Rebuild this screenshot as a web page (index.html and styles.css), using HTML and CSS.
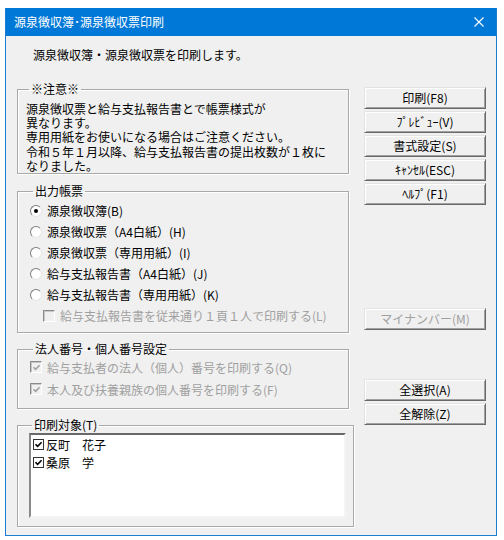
FILE: index.html
```html
<!DOCTYPE html>
<html lang="ja">
  <head>
    <meta charset="UTF-8" />
    <title>源泉徴収簿・源泉徴収票印刷</title>
    <link rel="stylesheet" href="styles.css">
  </head>
  <body>
    <div class="window">
      <div class="titlebar">
        <span class="title">源泉徴収簿･源泉徴収票印刷</span>
        <button class="close-btn" aria-label="閉じる">
          <svg width="10" height="10" viewBox="0 0 10 10">
            <path d="M0.5 0.5L9.5 9.5M9.5 0.5L0.5 9.5" stroke="#fff" stroke-width="1.1" fill="none" />
          </svg>
        </button>
      </div>

      <div class="client">
        <p class="intro">源泉徴収簿・源泉徴収票を印刷します。</p>

        <div class="columns">
          <div class="left">
            <fieldset class="group notice">
              <legend>※注意※</legend>
              <p>源泉徴収票と給与支払報告書とで帳票様式が<br />異なります。<br />専用用紙をお使いになる場合はご注意ください。<br />令和５年１月以降、給与支払報告書の提出枚数が１枚に<br />なりました。</p>
            </fieldset>

            <fieldset class="group output">
              <legend>出力帳票</legend>
              <label class="row"><span class="radio checked"></span>源泉徴収簿(B)</label>
              <label class="row"><span class="radio"></span>源泉徴収票（A4白紙）(H)</label>
              <label class="row"><span class="radio"></span>源泉徴収票（専用用紙）(I)</label>
              <label class="row"><span class="radio"></span>給与支払報告書（A4白紙）(J)</label>
              <label class="row"><span class="radio"></span>給与支払報告書（専用用紙）(K)</label>
              <label class="row sub disabled"><span class="check"></span>給与支払報告書を従来通り１頁１人で印刷する(L)</label>
            </fieldset>

            <fieldset class="group number">
              <legend>法人番号・個人番号設定</legend>
              <label class="row disabled">
                <span class="check">
                  <svg width="9" height="9" viewBox="0 0 9 9"><path d="M1.5 4.2L3.6 6.4L7.6 2.2" stroke="#a0a0a0" stroke-width="1.6" fill="none" /></svg>
                </span>給与支払者の法人（個人）番号を印刷する(Q)
              </label>
              <label class="row disabled">
                <span class="check">
                  <svg width="9" height="9" viewBox="0 0 9 9"><path d="M1.5 4.2L3.6 6.4L7.6 2.2" stroke="#a0a0a0" stroke-width="1.6" fill="none" /></svg>
                </span>本人及び扶養親族の個人番号を印刷する(F)
              </label>
            </fieldset>

            <fieldset class="group target">
              <legend>印刷対象(T)</legend>
              <div class="listbox">
                <div class="item">
                  <span class="item-check">
                    <svg width="9" height="9" viewBox="0 0 9 9"><path d="M1.5 4.2L3.6 6.4L7.6 2.2" stroke="#000" stroke-width="1.6" fill="none" /></svg>
                  </span>反町　花子
                </div>
                <div class="item">
                  <span class="item-check">
                    <svg width="9" height="9" viewBox="0 0 9 9"><path d="M1.5 4.2L3.6 6.4L7.6 2.2" stroke="#000" stroke-width="1.6" fill="none" /></svg>
                  </span>桑原　学
                </div>
              </div>
            </fieldset>
          </div>

          <div class="right">
            <div class="btn-stack">
              <button class="btn">印刷(F8)</button>
              <button class="btn">ﾌﾟﾚﾋﾞｭｰ(V)</button>
              <button class="btn">書式設定(S)</button>
              <button class="btn">ｷｬﾝｾﾙ(ESC)</button>
              <button class="btn">ﾍﾙﾌﾟ(F1)</button>
            </div>
            <div class="btn-stack mynumber">
              <button class="btn" disabled>マイナンバー(M)</button>
            </div>
            <div class="btn-stack select">
              <button class="btn">全選択(A)</button>
              <button class="btn">全解除(Z)</button>
            </div>
          </div>
        </div>
      </div>
    </div>
  </body>
</html>
```

FILE: styles.css
```css
body {
  margin: 0;
  background-color: white;
  font-family: "Noto Sans CJK JP", sans-serif;
  font-size: 12px;
  color: black;
}

.window {
  margin: 8px 0 0 5px;
  width: 492px;
  height: 528px;
  box-sizing: border-box;
  border: 1px solid #1a7fd4;
  border-top: none;
  background-color: #f0f0f0;
}

.titlebar {
  height: 28px;
  background-color: #0078d7;
  color: white;
  display: flex;
  align-items: center;
  justify-content: space-between;
  padding: 0 12px 0 8px;
}

.title {
  line-height: 16px;
}

.close-btn {
  background: none;
  border: none;
  padding: 0;
  width: 10px;
  height: 10px;
  display: flex;
}

.intro {
  margin: 0;
  padding: 11px 0 0 27px;
  line-height: 16px;
}

.columns {
  display: flex;
  padding-left: 11px;
}

.left {
  width: 337px;
  padding-top: 19px;
}

.right {
  width: 122px;
  margin-left: 10px;
  padding-top: 24px;
}

/* group boxes */
.group {
  margin: 0;
  min-width: 0;
  width: 332px;
  box-sizing: border-box;
  border: 1px solid #a9a9a9;
  box-shadow: inset 1px 1px 0 white, 1px 1px 0 white;
  padding: 0 8px;
}

.group legend {
  padding: 0 2px;
  margin-left: 3px;
  line-height: 14px;
}

.notice {
  padding: 6px 8px 0 8px;
}

.notice p {
  margin: 0;
  line-height: 14.2px;
}

.output {
  margin-top: 10px;
  padding: 2px 12px 6px 12px;
}

.number {
  margin-top: 9px;
  padding: 0 12px 8px 12px;
}

.number .row {
  height: 22px;
}

.target {
  margin-top: 9px;
  width: 337px;
  padding: 1px 7px 8px 11px;
}

.row {
  display: flex;
  align-items: center;
  gap: 5px;
  height: 21px;
  white-space: nowrap;
}

.row.sub {
  padding-left: 13px;
}

.row.disabled {
  color: #a0a0a0;
}

.radio {
  position: relative;
  width: 12px;
  height: 12px;
  box-sizing: border-box;
  border-radius: 50%;
  border: 1px solid;
  border-color: #7d7d7d #e6e6e6 #e6e6e6 #7d7d7d;
  background-color: white;
}

.radio.checked::after {
  content: "";
  position: absolute;
  left: 3px;
  top: 3px;
  width: 4px;
  height: 4px;
  border-radius: 50%;
  background-color: black;
}

.check {
  width: 12px;
  height: 12px;
  box-sizing: border-box;
  border: 1px solid;
  border-color: #8a8a8a #ffffff #ffffff #8a8a8a;
  box-shadow: inset 1px 1px 0 #c8c8c8;
  background-color: #f0f0f0;
  display: flex;
  align-items: center;
  justify-content: center;
}

/* list of people */
.listbox {
  height: 85px;
  box-sizing: border-box;
  border: 2px solid;
  border-color: #696969 #f4f4f4 #f4f4f4 #8a8a8a;
  background-color: white;
  padding: 0 2px;
}

.item {
  display: flex;
  align-items: center;
  gap: 2px;
  height: 18px;
}

.item-check {
  width: 11px;
  height: 11px;
  box-sizing: border-box;
  border: 1px solid #333;
  background-color: white;
  display: flex;
  align-items: center;
  justify-content: center;
}

/* buttons */
.btn-stack {
  display: flex;
  flex-direction: column;
  gap: 2px;
}

.btn-stack.mynumber {
  margin-top: 103px;
}

.btn-stack.select {
  margin-top: 49px;
}

.btn {
  height: 22px;
  padding: 0;
  font-family: "Noto Sans CJK JP", sans-serif;
  font-size: 12px;
  line-height: 16px;
  color: black;
  background-color: #f0f0f0;
  border: 1px solid;
  border-color: #e3e3e3 #696969 #696969 #e3e3e3;
  box-shadow: inset 1px 1px 0 white, inset -1px -1px 0 #a0a0a0;
}

.btn:disabled {
  color: #a0a0a0;
}
```
